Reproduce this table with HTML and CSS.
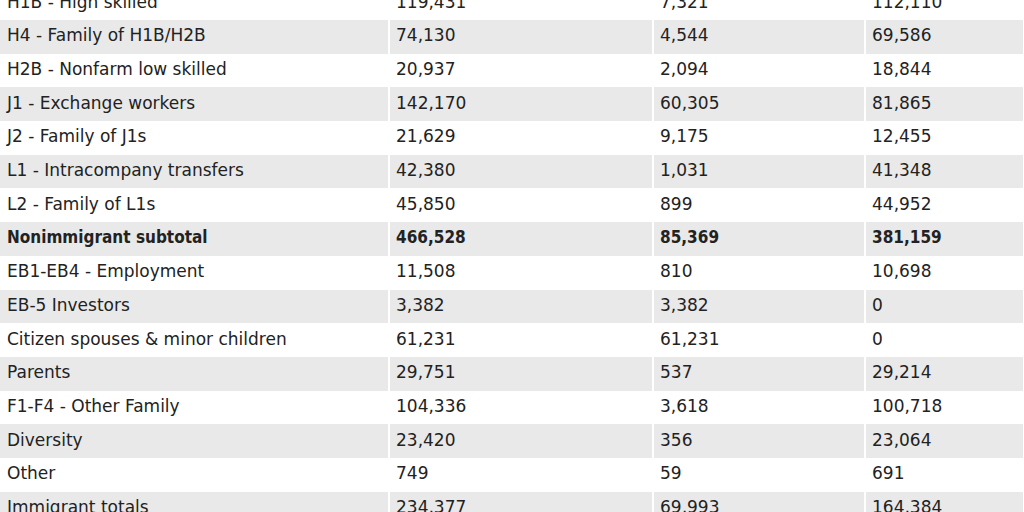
FILE: index.html
```html
<!DOCTYPE html>
<html>
<head>
<meta charset="utf-8">
<link rel="stylesheet" href="styles.css">
</head>
<body>
<table class="data">
  <colgroup>
    <col class="c1"><col class="c2"><col class="c3"><col class="c4">
  </colgroup>
  <tbody>
    <tr><td>H1B - High skilled</td><td>119,431</td><td>7,321</td><td>112,110</td></tr>
    <tr><td>H4 - Family of H1B/H2B</td><td>74,130</td><td>4,544</td><td>69,586</td></tr>
    <tr><td>H2B - Nonfarm low skilled</td><td>20,937</td><td>2,094</td><td>18,844</td></tr>
    <tr><td>J1 - Exchange workers</td><td>142,170</td><td>60,305</td><td>81,865</td></tr>
    <tr><td>J2 - Family of J1s</td><td>21,629</td><td>9,175</td><td>12,455</td></tr>
    <tr><td>L1 - Intracompany transfers</td><td>42,380</td><td>1,031</td><td>41,348</td></tr>
    <tr><td>L2 - Family of L1s</td><td>45,850</td><td>899</td><td>44,952</td></tr>
    <tr class="subtotal"><td>Nonimmigrant subtotal</td><td>466,528</td><td>85,369</td><td>381,159</td></tr>
    <tr><td>EB1-EB4 - Employment</td><td>11,508</td><td>810</td><td>10,698</td></tr>
    <tr><td>EB-5 Investors</td><td>3,382</td><td>3,382</td><td>0</td></tr>
    <tr><td>Citizen spouses &amp; minor children</td><td>61,231</td><td>61,231</td><td>0</td></tr>
    <tr><td>Parents</td><td>29,751</td><td>537</td><td>29,214</td></tr>
    <tr><td>F1-F4 - Other Family</td><td>104,336</td><td>3,618</td><td>100,718</td></tr>
    <tr><td>Diversity</td><td>23,420</td><td>356</td><td>23,064</td></tr>
    <tr><td>Other</td><td>749</td><td>59</td><td>691</td></tr>
    <tr><td>Immigrant totals</td><td>234,377</td><td>69,993</td><td>164,384</td></tr>
  </tbody>
</table>
</body>
</html>
```

FILE: styles.css
```css
html, body {
  margin: 0;
  padding: 0;
  background: #ffffff;
  overflow: hidden;
}

.data {
  margin-top: -13.7px;
  width: 1023px;
  border-collapse: separate;
  border-spacing: 0;
  table-layout: fixed;
  font-family: "DejaVu Sans", sans-serif;
  font-size: 17px;
  color: #222222;
}

.c1 { width: 388px; }
.c2 { width: 264px; }
.c3 { width: 212px; }
.c4 { width: 159px; }

.data td {
  height: 33.7px;
  padding: 0 6px 3px 7px;
  line-height: 20px;
  vertical-align: middle;
  white-space: nowrap;
  box-sizing: border-box;
}

.data td + td {
  border-left: 2px solid #ffffff;
  padding-left: 6px;
}

.data tr:nth-child(even) td {
  background: #e9e9e9;
}

.subtotal td {
  font-family: "DejaVu Sans Condensed", "DejaVu Sans", sans-serif;
  font-weight: bold;
}
```
